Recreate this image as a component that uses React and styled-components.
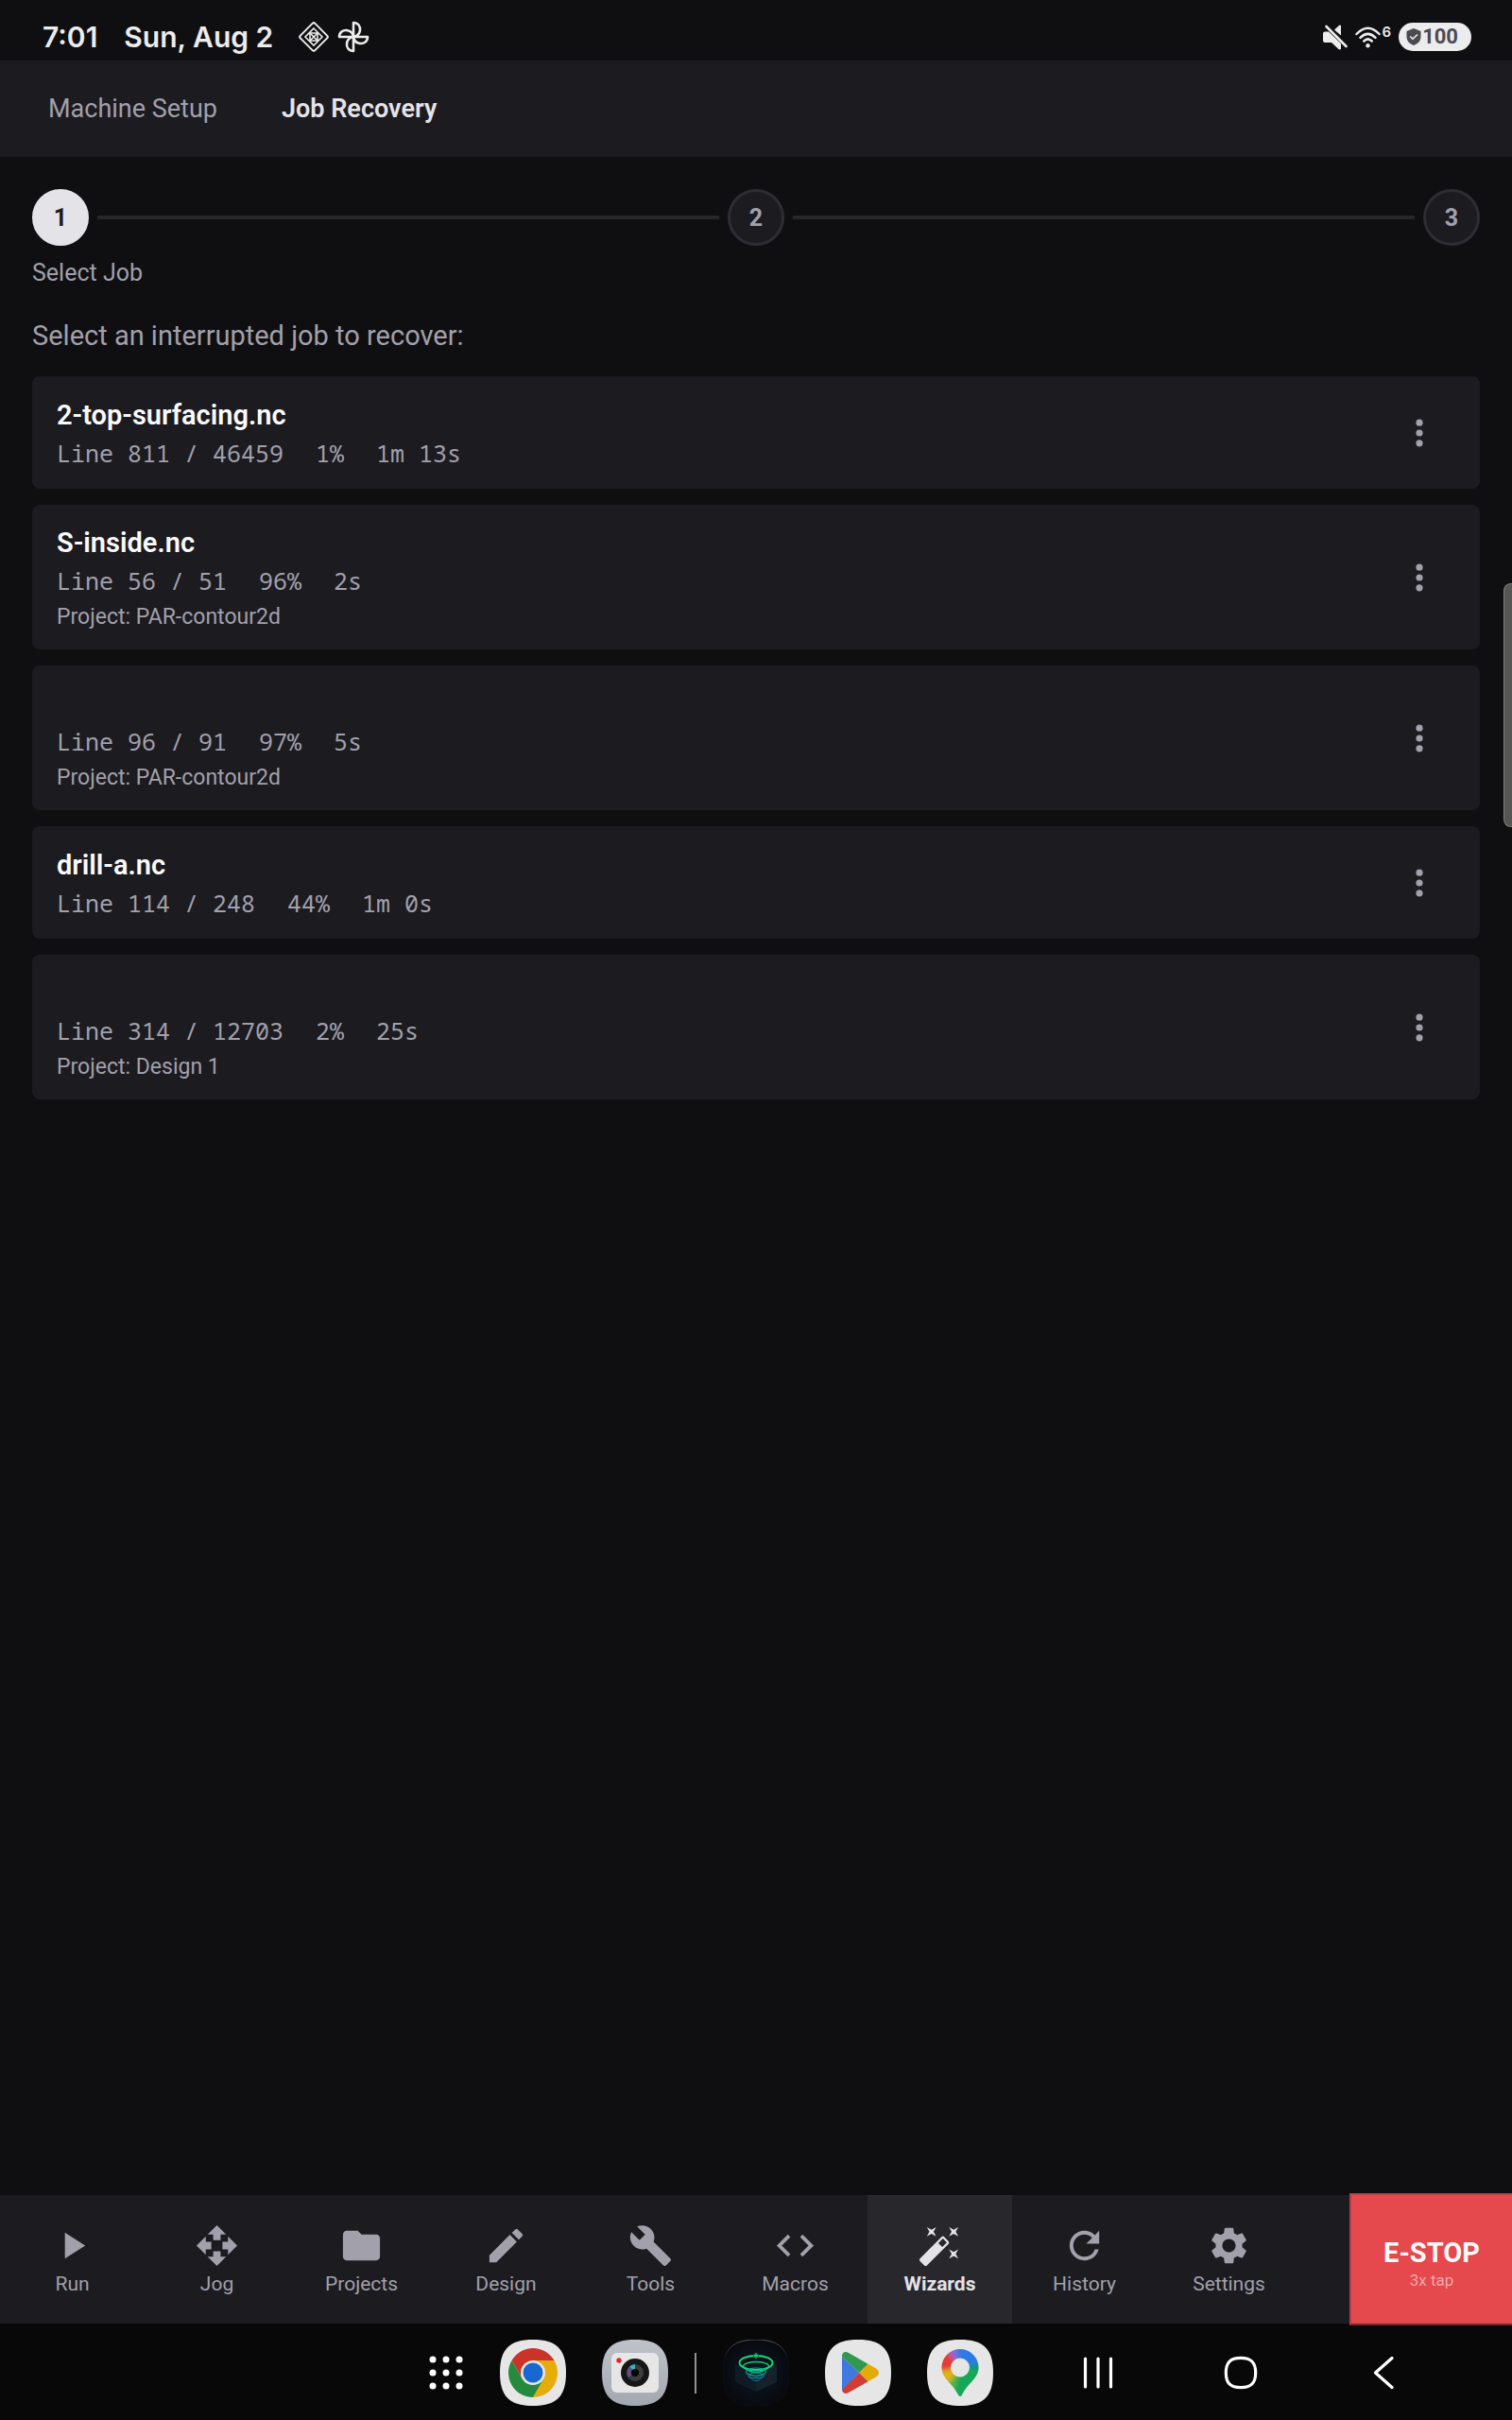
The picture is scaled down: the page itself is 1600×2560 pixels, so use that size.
import React from 'react';
import styled, { createGlobalStyle } from 'styled-components';
import {
  MdPlayArrow, MdOpenWith, MdFolder, MdEdit, MdBuild, MdCode,
  MdAutoFixHigh, MdRefresh, MdSettings,
} from 'react-icons/md';

const c = {
  page: '#0f0f11',
  surface: '#1c1b20',
  active: '#28272c',
  line: '#27272a',
  muted: '#a1a0ab',
  bright: '#e4e3e8',
  white: '#fafafa',
  system: '#080808',
  status: '#ececec',
  danger: '#e5484d',
};

const Global = createGlobalStyle`
  *, *::before, *::after { box-sizing: border-box; }
  body { margin: 0; background: ${c.page}; font-family: Roboto, "Liberation Sans", sans-serif; }
  h1, h2, p, ol, ul { margin: 0; padding: 0; }
  ol, ul { list-style: none; }
  button { border: 0; padding: 0; background: none; font: inherit; color: inherit; cursor: pointer; }
  svg { display: block; flex: none; }
`;

const Screen = styled.div`
  min-height: 100vh;
  display: flex;
  flex-direction: column;
  background: ${c.page};
  color: ${c.muted};
`;

const StatusBar = styled.header`
  display: flex;
  align-items: center;
  justify-content: space-between;
  height: 64px;
  padding: 14px 43px 0 45px;
  color: ${c.status};
  font-family: Inter, Roboto, sans-serif;
  font-weight: 600;
`;

const StatusGroup = styled.div`
  display: flex;
  align-items: center;
  gap: 8px;
`;

const StatusText = styled.span`
  font-size: 30px;
  line-height: 36px;
  margin-right: ${(p) => p.$after}px;
`;

const WifiGroup = styled.div`
  display: flex;
  align-items: flex-start;
  gap: 2px;
  font-size: 15px;
  line-height: 12px;
`;

const Battery = styled.div`
  display: flex;
  align-items: center;
  gap: 1px;
  height: 30px;
  padding: 0 14px 0 8px;
  border-radius: 15px;
  background: ${c.status};
  color: #4a4a50;
  font-family: Roboto, sans-serif;
  font-size: 22px;
  font-weight: 700;
  line-height: 30px;
`;

const TabBar = styled.nav`
  display: flex;
  height: 102px;
  padding: 0 17px;
  background: ${c.surface};
`;

const Tab = styled.button`
  padding: 0 34px;
  font-size: 27px;
  line-height: 36px;
  font-weight: ${(p) => (p.$active ? 600 : 400)};
  color: ${(p) => (p.$active ? c.bright : c.muted)};
`;

const Main = styled.main`
  flex: 1;
  padding: 34px;
`;

const Stepper = styled.ol`
  display: flex;
  align-items: center;
`;

const Step = styled.li`
  display: flex;
  align-items: center;
  flex: ${(p) => (p.$last ? 'none' : 1)};
`;

const StepCircle = styled.span`
  display: flex;
  align-items: center;
  justify-content: center;
  width: 60px;
  height: 60px;
  padding-top: 2px;
  border: 3px solid ${(p) => (p.$current ? c.bright : '#2e2d33')};
  border-radius: 50%;
  background: ${(p) => (p.$current ? c.bright : c.surface)};
  color: ${(p) => (p.$current ? c.surface : c.muted)};
  font-size: 25px;
  line-height: 30px;
  font-weight: 700;
`;

const StepLine = styled.span`
  flex: 1;
  height: 4px;
  margin: 0 9px;
  background: ${c.line};
`;

const StepLabel = styled.p`
  margin-top: 14px;
  font-size: 25px;
  line-height: 30px;
`;

const Prompt = styled.h1`
  margin-top: 33px;
  font-size: 29px;
  line-height: 36px;
  font-weight: 400;
`;

const JobList = styled.ul`
  display: flex;
  flex-direction: column;
  gap: 17px;
  margin-top: 25px;
`;

const JobCard = styled.li`
  display: flex;
  align-items: center;
  justify-content: space-between;
  min-height: ${(p) => (p.$tall ? 153 : 119)}px;
  padding: 17px 26px;
  border-radius: 8px;
  background: ${c.surface};
`;

const JobTitle = styled.h2`
  height: 42px;
  font-size: 29px;
  line-height: 42px;
  font-weight: 600;
  color: ${c.white};
`;

const JobStats = styled.p`
  display: flex;
  gap: 34px;
  font-family: "Noto Sans Mono", "DejaVu Sans Mono", monospace;
  font-size: 25px;
  line-height: 38px;
`;

const JobProject = styled.p`
  margin-top: 4px;
  font-size: 23px;
  line-height: 32px;
`;

const MoreButton = styled.button`
  display: flex;
  align-items: center;
  justify-content: center;
  width: 76px;
  height: 68px;
  color: ${c.muted};
`;

const BottomNav = styled.nav`
  display: flex;
  height: 136px;
  background: ${c.surface};
`;

const NavItems = styled.div`
  display: flex;
  flex: 1;
  padding-right: 51px;
`;

const NavItem = styled.button`
  flex: 1;
  min-width: 0;
  display: flex;
  flex-direction: column;
  align-items: center;
  justify-content: center;
  gap: 4px;
  padding-top: 1px;
  background: ${(p) => (p.$active ? c.active : 'transparent')};
  color: ${(p) => (p.$active ? c.bright : c.muted)};
  font-size: 21px;
  line-height: 26px;
  font-weight: ${(p) => (p.$active ? 700 : 400)};
`;

const EStop = styled.button`
  position: relative;
  z-index: 1;
  display: flex;
  flex-direction: column;
  align-items: center;
  justify-content: center;
  width: 172px;
  height: 140px;
  margin: -2px 0;
  padding-top: 9px;
  border: 2px solid #b93d42;
  border-right-width: 0;
  border-bottom-color: #742629;
  background: ${c.danger};
  color: ${c.white};
`;

const EStopTitle = styled.span`
  font-size: 29px;
  line-height: 34px;
  font-weight: 700;
`;

const EStopHint = styled.span`
  font-size: 17px;
  line-height: 24px;
  color: #f2a6a8;
`;

const SystemBar = styled.footer`
  display: flex;
  align-items: center;
  justify-content: flex-end;
  height: 102px;
  padding: 2px 101px 0 0;
  background: ${c.system};
  color: #ffffff;
`;

const Dock = styled.div`
  display: flex;
  align-items: center;
  gap: ${(p) => p.$gap}px;
  margin-right: ${(p) => p.$after || 0}px;
`;

const DockDivider = styled.span`
  width: 2px;
  height: 43px;
  background: #929292;
`;

const SysButton = styled.button`
  display: flex;
  align-items: center;
  justify-content: center;
  width: 70px;
  height: 70px;
`;

const EdgeHandle = styled.div`
  position: absolute;
  top: 617px;
  right: 0;
  width: 9px;
  height: 258px;
  border: 1px solid #7f7f7d;
  border-right: 0;
  border-radius: 8px 0 0 8px;
  background: #565655;
`;

const PinIcon = () => (
  <svg width="34" height="34" viewBox="0 0 34 34" fill="none" stroke="currentColor" strokeWidth="2">
    <rect x="6" y="6" width="22" height="22" rx="2" transform="rotate(45 17 17)" />
    <g strokeWidth="1.6">
      <path d="M17 8l9 9-9 9-9-9z" />
      <path d="M12.500 12.500L21.500 21.500M21.500 12.500L12.500 21.500" />
      <path d="M13 13H21V21H13Z" />
    </g>
  </svg>
);

const FanIcon = () => (
  <svg width="34" height="34" viewBox="0 0 34 34" fill="none" stroke="currentColor" strokeWidth="2.6" strokeLinejoin="round">
    {[0, 90, 180, 270].map((a) => (
      <path key={a} transform={`rotate(${a} 17 17)`} d="M17 17V2C22 2 24.500 6 24 10C23.500 13.500 21 16.500 17 17" />
    ))}
  </svg>
);

const MuteIcon = () => (
  <svg width="26" height="27" viewBox="0 0 26 27">
    <path d="M0 9.500Q0 7.500 2 7.500H6L19 20V26L17 26.500L9 19H2Q0 19 0 17ZM12 5.500L17.500 0.500L19 1V11.500Z" fill="currentColor" />
    <path d="M3.500 2L24.500 23" stroke="currentColor" strokeWidth="2.600" strokeLinecap="round" />
  </svg>
);

const WifiIcon = () => (
  <svg width="27" height="23" viewBox="0 0 27 23" fill="none" stroke="currentColor" strokeWidth="2.500" strokeLinecap="round">
    <path d="M1.500 8Q13.500-4.500 25.500 8M5.500 11.800Q13.500 3.800 21.500 11.800M9.300 15.500Q13.500 11.300 17.700 15.500" />
    <circle cx="13.500" cy="20.200" r="2.200" fill="currentColor" stroke="none" />
  </svg>
);

const ShieldIcon = () => (
  <svg width="16" height="18" viewBox="0 0 16 18">
    <path d="M8 0L15.500 3V9C15.500 13.500 12 16.500 8 18C4 16.500 .5 13.500 .5 9V3Z" fill="currentColor" />
    <path d="M4.200 8.500L7 11.200L12 6.500" fill="none" stroke={c.status} strokeWidth="1.600" />
  </svg>
);

const DotsIcon = () => (
  <svg width="8" height="30" viewBox="0 0 8 30" fill="currentColor">
    <circle cx="4" cy="4.200" r="3.600" />
    <circle cx="4" cy="15" r="3.600" />
    <circle cx="4" cy="25.800" r="3.600" />
  </svg>
);

const tilePath = 'M35 0C60 0 70 10 70 35S60 70 35 70S0 60 0 35S10 0 35 0Z';

const Tile = ({ fill = '#e6e6e6', children }) => (
  <svg width="70" height="70" viewBox="0 0 70 70">
    <path d={tilePath} fill={fill} />
    {children}
  </svg>
);

const ChromeIcon = () => (
  <Tile>
    <path d="M12.500 22A26 26 0 0 1 57.500 22H35L23.740 41.500Z" fill="#cb3328" />
    <path d="M57.500 22A26 26 0 0 1 35 61L46.260 41.500L35 22Z" fill="#e5ac0c" />
    <path d="M35 61A26 26 0 0 1 12.500 22L23.740 41.500H46.260Z" fill="#25893e" />
    <circle cx="35" cy="35" r="13" fill="#e6e6e6" />
    <circle cx="35" cy="35" r="10.500" fill="#1967d2" />
  </Tile>
);

const CameraIcon = () => (
  <Tile fill="url(#camTile)">
    <defs>
      <linearGradient id="camTile" x1="0" y1="0" x2="0" y2="1">
        <stop offset="0" stopColor="#bfc3c9" />
        <stop offset="1" stopColor="#a3a7b0" />
      </linearGradient>
    </defs>
    <rect x="10" y="14" width="50" height="42" rx="6" fill="#e6e6e7" />
    <circle cx="18" cy="22" r="2.700" fill="#e0262b" />
    <circle cx="35" cy="35" r="15" fill="#161616" />
    <circle cx="35" cy="35" r="9" fill="#3d3d3f" />
    <path d="M35 35V26A9 9 0 0 0 29 28.500Z" fill="#35b3c4" />
    <path d="M35 35L29 28.500A9 9 0 0 0 28 40Z" fill="#5d4f86" />
    <circle cx="35" cy="35" r="4" fill="#000000" />
  </Tile>
);

const VortexIcon = () => (
  <Tile fill="url(#vortexTile)">
    <defs>
      <radialGradient id="vortexTile">
        <stop offset="0" stopColor="#0e1824" />
        <stop offset="1" stopColor="#080a10" />
      </radialGradient>
      <linearGradient id="vortexRim" x1="0" y1="0" x2="0" y2="1">
        <stop offset="0" stopColor="#56585c" />
        <stop offset="0.3" stopColor="#0a0d12" />
      </linearGradient>
    </defs>
    <path d={tilePath} fill="none" stroke="url(#vortexRim)" />
    <path d="M13 26L35 35V55L13 45Z" fill="#111b26" />
    <path d="M57 26L35 35V55L57 45Z" fill="#16212c" />
    <g fill="none">
      <ellipse cx="35" cy="24.500" rx="17.500" ry="7.500" stroke="#0be47a" strokeWidth="1.800" />
      <ellipse cx="35" cy="28" rx="13.500" ry="4.500" stroke="#0ccc7c" strokeWidth="1.400" />
      <path d="M20 28Q35 41 50 28" stroke="#0bd57b" strokeWidth="1.400" />
      <ellipse cx="35" cy="34" rx="10.500" ry="4" stroke="#109c91" strokeWidth="1.200" />
      <ellipse cx="35" cy="38" rx="8" ry="3" stroke="#12869a" strokeWidth="1.200" />
      <ellipse cx="35" cy="41.500" rx="4.500" ry="2" stroke="#126f8b" />
      <circle cx="35" cy="17" r="2.500" stroke="#0b7549" />
      <path d="M35 14.500V19.500" stroke="#0be47a" />
    </g>
  </Tile>
);

const PlayIcon = () => (
  <Tile>
    <clipPath id="playShape">
      <path d="M18 17.500C18 13.500 21.500 12 25 14L54 30.500C58 33 58 37 54 39.500L25 56C21.500 58 18 56.500 18 52.500Z" />
    </clipPath>
    <g clipPath="url(#playShape)">
      <path d="M17 17L36.300 35L17 55Z" fill="#3f78df" />
      <path d="M17 17V10H30L45.700 25.700L36.300 35Z" fill="#31994d" />
      <path d="M17 54V60H30L45.700 44.300L36.300 35Z" fill="#d23d33" />
      <path d="M36.300 35L45.700 25.700L60 30V40L45.700 44.300Z" fill="#e3ab08" />
    </g>
  </Tile>
);

const MapsIcon = () => (
  <Tile>
    <clipPath id="pinShape">
      <path clipRule="evenodd" d="M35 10A19.500 19.500 0 0 0 15.500 29.500C15.500 41 26 45 32.500 57.500Q35 62.500 37.500 57.500C44 45 54.500 41 54.500 29.500A19.500 19.500 0 0 0 35 10ZM35 19.500A10 10 0 0 1 35 39.500A10 10 0 0 1 35 19.500Z" />
    </clipPath>
    <filter id="pinBlend" x="-20%" y="-20%" width="140%" height="140%">
      <feGaussianBlur stdDeviation="2" />
    </filter>
    <g clipPath="url(#pinShape)">
      <g filter="url(#pinBlend)">
        <rect x="5" y="0" width="60" height="70" fill="#15a857" />
        <path d="M35 30L28 0H60L62 22Z" fill="#2f7ae5" />
        <path d="M35 30L62 22V32Z" fill="#0c9488" />
        <path d="M35 30L28 0H20L18 10Z" fill="#9268cf" />
        <path d="M35 30L18 8L5 12V36Z" fill="#e23c39" />
        <path d="M35 30L5 34V48L22 47Z" fill="#e0b413" />
        <path d="M35 30L22 47L28 56Z" fill="#5cb446" />
      </g>
    </g>
  </Tile>
);

const AppsIcon = () => (
  <svg width="36" height="36" viewBox="0 0 36 36" fill="currentColor">
    {[4, 18, 32].map((y) => [4, 18, 32].map((x) => <circle key={`${x}-${y}`} cx={x} cy={y} r="3.500" />))}
  </svg>
);

const RecentsIcon = () => (
  <svg width="32" height="34" viewBox="0 0 32 34" stroke="currentColor" strokeWidth="3.200" strokeLinecap="round">
    <path d="M2.500 2V32M16 2V32M29.500 2V32" />
  </svg>
);

const HomeIcon = () => (
  <svg width="36" height="36" viewBox="0 0 36 36" fill="none" stroke="currentColor" strokeWidth="3.200">
    <path d="M18 2.300C29 2.300 33.700 7 33.700 18S29 33.700 18 33.700S2.300 29 2.300 18S7 2.300 18 2.300Z" />
  </svg>
);

const BackIcon = () => (
  <svg width="22" height="36" viewBox="0 0 22 36" fill="none" stroke="currentColor" strokeWidth="3.200" strokeLinecap="round" strokeLinejoin="round">
    <path d="M20 2.500L2.500 18L20 33.500" />
  </svg>
);

const jobs = [
  { title: '2-top-surfacing.nc', stats: ['Line 811 / 46459', '1%', '1m 13s'] },
  { title: 'S-inside.nc', stats: ['Line 56 / 51', '96%', '2s'], project: 'PAR-contour2d' },
  { title: '', stats: ['Line 96 / 91', '97%', '5s'], project: 'PAR-contour2d' },
  { title: 'drill-a.nc', stats: ['Line 114 / 248', '44%', '1m 0s'] },
  { title: '', stats: ['Line 314 / 12703', '2%', '25s'], project: 'Design 1' },
];

const navItems = [
  ['Run', MdPlayArrow], ['Jog', MdOpenWith], ['Projects', MdFolder],
  ['Design', MdEdit], ['Tools', MdBuild], ['Macros', MdCode],
  ['Wizards', MdAutoFixHigh], ['History', MdRefresh], ['Settings', MdSettings],
];

export default function App() {
  return (
    <Screen>
      <Global />
      <StatusBar>
        <StatusGroup>
          <StatusText $after={20}>7:01</StatusText>
          <StatusText $after={18}>Sun, Aug 2</StatusText>
          <PinIcon />
          <FanIcon />
        </StatusGroup>
        <StatusGroup>
          <MuteIcon />
          <WifiGroup><WifiIcon />6</WifiGroup>
          <Battery><ShieldIcon />100</Battery>
        </StatusGroup>
      </StatusBar>

      <TabBar>
        <Tab>Machine Setup</Tab>
        <Tab $active>Job Recovery</Tab>
      </TabBar>

      <Main>
        <Stepper>
          {[1, 2, 3].map((n) => (
            <Step key={n} $last={n === 3}>
              <StepCircle $current={n === 1}>{n}</StepCircle>
              {n < 3 && <StepLine />}
            </Step>
          ))}
        </Stepper>
        <StepLabel>Select Job</StepLabel>
        <Prompt>Select an interrupted job to recover:</Prompt>
        <JobList>
          {jobs.map((job, i) => (
            <JobCard key={i} $tall={Boolean(job.project)}>
              <div>
                <JobTitle>{job.title}</JobTitle>
                <JobStats>{job.stats.map((s) => <span key={s}>{s}</span>)}</JobStats>
                {job.project && <JobProject>Project: {job.project}</JobProject>}
              </div>
              <MoreButton aria-label="More options"><DotsIcon /></MoreButton>
            </JobCard>
          ))}
        </JobList>
      </Main>

      <BottomNav>
        <NavItems>
          {navItems.map(([label, Icon]) => (
            <NavItem key={label} $active={label === 'Wizards'}>
              <Icon size={47} />
              {label}
            </NavItem>
          ))}
        </NavItems>
        <EStop>
          <EStopTitle>E-STOP</EStopTitle>
          <EStopHint>3x tap</EStopHint>
        </EStop>
      </BottomNav>

      <SystemBar>
        <Dock $gap={22} $after={76}>
          <SysButton aria-label="All apps"><AppsIcon /></SysButton>
          <Dock $gap={28}>
            <Dock $gap={38}>
              <SysButton aria-label="Chrome"><ChromeIcon /></SysButton>
              <SysButton aria-label="Camera"><CameraIcon /></SysButton>
            </Dock>
            <DockDivider />
            <Dock $gap={38}>
              <SysButton aria-label="CNC control"><VortexIcon /></SysButton>
              <SysButton aria-label="Play Store"><PlayIcon /></SysButton>
              <SysButton aria-label="Maps"><MapsIcon /></SysButton>
            </Dock>
          </Dock>
        </Dock>
        <Dock $gap={81}>
          <SysButton aria-label="Recents"><RecentsIcon /></SysButton>
          <SysButton aria-label="Home"><HomeIcon /></SysButton>
          <SysButton aria-label="Back"><BackIcon /></SysButton>
        </Dock>
      </SystemBar>
      <EdgeHandle />
    </Screen>
  );
}
